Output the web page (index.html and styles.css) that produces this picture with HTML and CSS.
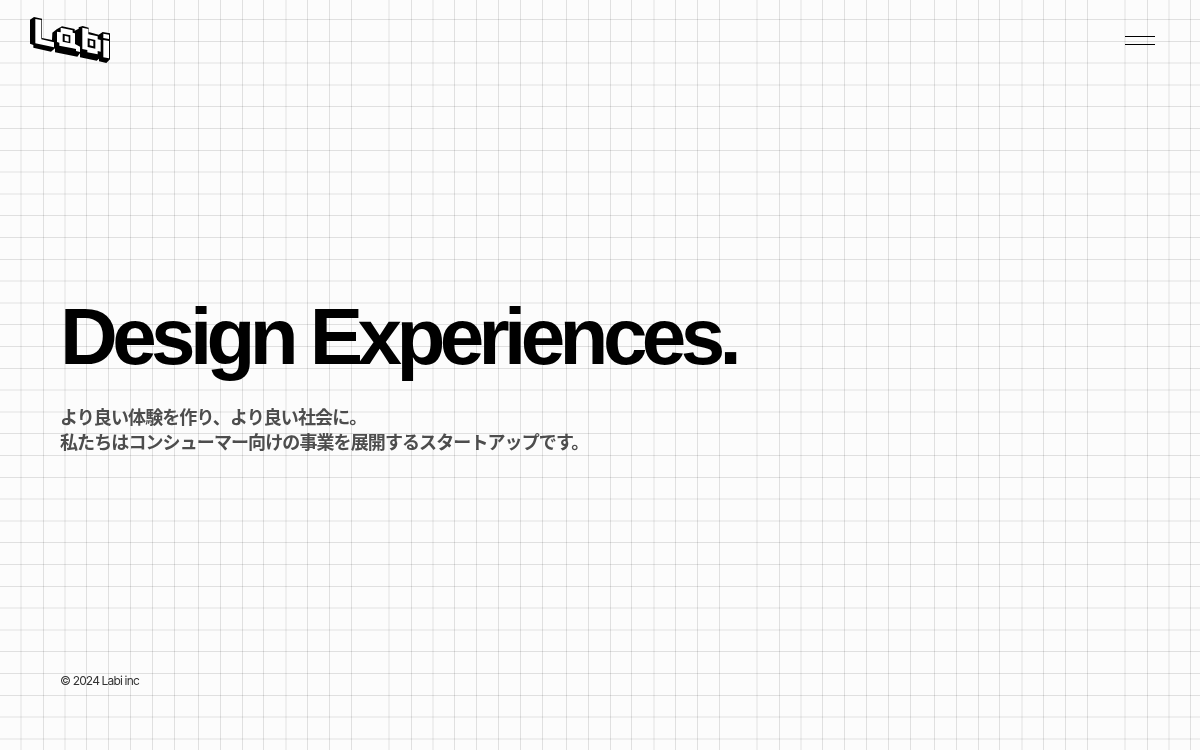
FILE: index.html
```
<!DOCTYPE html>
<html lang="ja">
<head>
  <meta charset="UTF-8">
  <meta name="viewport" content="width=device-width, initial-scale=1.0">
  <title>Labi inc</title>
  <link rel="stylesheet" href="styles.css">
</head>
<body>

  <!-- Background grid -->
  <svg class="bg-grid" aria-hidden="true">
    <defs>
      <pattern id="columns" x="20" width="368" height="109" patternUnits="userSpaceOnUse">
        <path class="line" d="M23.5 0v109M66.5 0v109M88.5 0v109M110.5 0v109M132.5 0v109M154.5 0v109M178.5 0v109M200.5 0v109M222.5 0v109M243.5 0v109M287.5 0v109M309.5 0v109M331.5 0v109"/>
        <path class="line soft" d="M1 0v109M45 0v109M266 0v109"/>
      </pattern>
      <pattern id="rows" y="19" width="368" height="109" patternUnits="userSpaceOnUse">
        <path class="line" d="M0 .5h368M0 22.5h368M0 87.5h368"/>
        <path class="line soft" d="M0 44h368M0 66h368"/>
      </pattern>
    </defs>
    <rect width="100%" height="100%" fill="url(#columns)"/>
    <rect width="100%" height="100%" fill="url(#rows)"/>
  </svg>

  <div class="container">
    <header class="header">
      <a class="logo" href="#" aria-label="Labi">
        <svg viewBox="0 0 240 144" aria-hidden="true">
          <path d="M0 11L12 3L36 8V66L66 72L67 50L80 40L96 31L134 39V44L146 38V34L158 30L176 35V48L206 56L218 48L240 52V130L229 141L207 136V128L200 134L150 124V112L142 122L75 109V97L63 107L10 95V87L0 83Z"/>
          <path fill="#fff" d="M16 9L34 12V70L72 79V94L16 82Z"/>
          <path fill="#fff" d="M92 35L128 43V50L135 52V84L150 92V108L138 105V99L128 97L88 89V80L81 78V47L92 49Z"/>
          <path d="M98 53L121 58V82L98 77Z"/>
          <path fill="#fff" d="M104 59L116 62V77L104 74Z"/>
          <path fill="#fff" d="M157 35L175 39V55L203 61V70L212 72V107L203 105V115L172 109V102L157 99Z"/>
          <path d="M173 67L196 72V98L173 93Z"/>
          <path fill="#fff" d="M179 73L190 76V91L179 88Z"/>
          <path fill="#fff" d="M220 53L237 56V69L220 66ZM220 72L237 75V127L220 124Z"/>
        </svg>
      </a>
      <button class="menu" type="button" aria-label="Menu">
        <span></span>
        <span></span>
      </button>
    </header>

    <main class="hero">
      <h1>Design Experiences.</h1>
      <p>より良い体験を作り、より良い社会に。<br>私たちはコンシューマー向けの事業を展開するスタートアップです。</p>
    </main>

    <footer class="footer">
      <small>© 2024 Labi inc</small>
    </footer>
  </div>

</body>
</html>
```
FILE: styles.css
```
* {
  margin: 0;
  padding: 0;
  box-sizing: border-box;
}

body {
  font-family: Inter, "Noto Sans CJK JP", sans-serif;
  color: #000;
  background: #fcfcfc;
}

.bg-grid {
  position: fixed;
  inset: 0;
  width: 100%;
  height: 100%;
  z-index: -1;
}

.line {
  fill: none;
  stroke: rgba(0, 0, 0, 0.11);
  stroke-width: 1;
}

.line.soft {
  stroke: rgba(0, 0, 0, 0.05);
  stroke-width: 2;
}

.container {
  display: flex;
  flex-direction: column;
  min-height: 100vh;
}

.header {
  display: flex;
  justify-content: space-between;
  align-items: center;
  height: 80px;
  padding: 0 45px 0 30px;
}

.logo svg {
  display: block;
  width: 80px;
  height: 48px;
}

.menu {
  display: flex;
  flex-direction: column;
  gap: 7px;
  width: 30px;
  border: none;
  background: none;
  cursor: pointer;
}

.menu span {
  width: 100%;
  height: 1px;
  background: #000;
}

.hero {
  flex: 1;
  display: flex;
  flex-direction: column;
  justify-content: center;
  padding: 0 60px 8px;
}

.hero h1 {
  font-family: "Liberation Sans", Arial, sans-serif;
  font-size: 80px;
  font-weight: 700;
  line-height: 96px;
  letter-spacing: -0.07em;
}

.hero p {
  margin-top: 20px;
  font-size: 18px;
  font-weight: 700;
  line-height: 25px;
  letter-spacing: -0.05em;
  color: #4d4d4d;
}

.footer {
  padding: 0 60px 60px;
  line-height: 18px;
}

.footer small {
  display: block;
  font-size: 12px;
  letter-spacing: -0.07em;
  color: #333;
}
```
